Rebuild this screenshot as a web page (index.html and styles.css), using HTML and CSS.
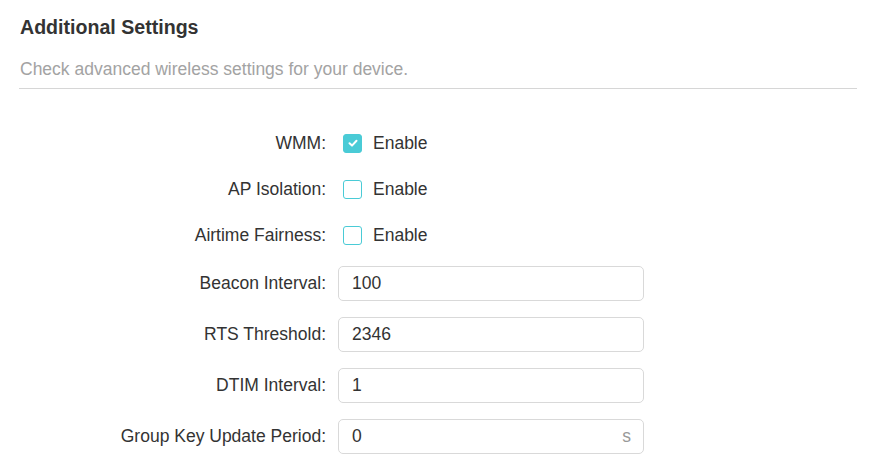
FILE: index.html
```html
<!DOCTYPE html>
<html lang="en">
<head>
    <meta charset="UTF-8">
    <meta name="viewport" content="width=device-width, initial-scale=1.0">
    <title>Additional Settings</title>
    <link rel="stylesheet" href="styles.css">
</head>
<body>

    <div class="panel">
        <div class="panel-head">
            <h2>Additional Settings</h2>
            <p class="desc">Check advanced wireless settings for your device.</p>
        </div>

        <div class="form">
            <div class="row check-row">
                <label class="label">WMM:</label>
                <div class="field">
                    <span class="checkbox checked">
                        <svg width="12" height="12" viewBox="0 0 12 12"><path d="M2.5 6.3 L5 8.6 L9.5 3.8" fill="none" stroke="#fff" stroke-width="2" stroke-linecap="round" stroke-linejoin="round"/></svg>
                    </span>
                    <span class="check-text">Enable</span>
                </div>
            </div>
            <div class="row check-row">
                <label class="label">AP Isolation:</label>
                <div class="field">
                    <span class="checkbox"></span>
                    <span class="check-text">Enable</span>
                </div>
            </div>
            <div class="row check-row">
                <label class="label">Airtime Fairness:</label>
                <div class="field">
                    <span class="checkbox"></span>
                    <span class="check-text">Enable</span>
                </div>
            </div>
            <div class="row input-row">
                <label class="label">Beacon Interval:</label>
                <div class="field">
                    <div class="text-box"><input type="text" value="100"></div>
                </div>
            </div>
            <div class="row input-row">
                <label class="label">RTS Threshold:</label>
                <div class="field">
                    <div class="text-box"><input type="text" value="2346"></div>
                </div>
            </div>
            <div class="row input-row">
                <label class="label">DTIM Interval:</label>
                <div class="field">
                    <div class="text-box"><input type="text" value="1"></div>
                </div>
            </div>
            <div class="row input-row">
                <label class="label">Group Key Update Period:</label>
                <div class="field">
                    <div class="text-box"><input type="text" value="0"><span class="unit">s</span></div>
                </div>
            </div>
        </div>
    </div>

</body>
</html>
```

FILE: styles.css
```css
body {
    margin: 0;
    font-family: "Liberation Sans", Arial, sans-serif;
    background: #fff;
    color: #333;
}
.panel {
    width: 838px;
    padding-left: 19px;
}
.panel-head {
    padding-top: 15px;
    padding-bottom: 9px;
    border-bottom: 1px solid #d6d6d6;
}
.panel-head h2 {
    margin: 0 0 0 1px;
    font-size: 19.6px;
    line-height: 24px;
    font-weight: bold;
    color: #333;
}
.desc {
    margin: 20px 0 0 1px;
    font-size: 17.5px;
    line-height: 20px;
    color: #a3a3a3;
}
.form {
    padding-top: 31px;
}
.row {
    display: flex;
    align-items: center;
}
.check-row {
    height: 46px;
}
.input-row {
    height: 51px;
}
.label {
    width: 307px;
    text-align: right;
    font-size: 17.5px;
    padding-right: 12px;
}
.field {
    display: flex;
    align-items: center;
}
.checkbox {
    width: 17px;
    height: 17px;
    border: 1.5px solid #4acbd6;
    border-radius: 3px;
    margin-left: 5px;
    display: flex;
    align-items: center;
    justify-content: center;
}
.checkbox.checked {
    background: #4acbd6;
}
.check-text {
    margin-left: 11px;
    font-size: 17.5px;
}
.text-box {
    height: 33px;
    width: 279px;
    border: 1px solid #d9d9d9;
    border-radius: 5px;
    display: flex;
    align-items: center;
    padding: 0 12px 0 13px;
}
.text-box input {
    flex: 1;
    border: none;
    outline: none;
    padding: 0;
    font-family: "Liberation Sans", Arial, sans-serif;
    font-size: 17.5px;
    color: #333;
    background: transparent;
    min-width: 0;
}
.unit {
    font-size: 17.5px;
    color: #999;
}
```
